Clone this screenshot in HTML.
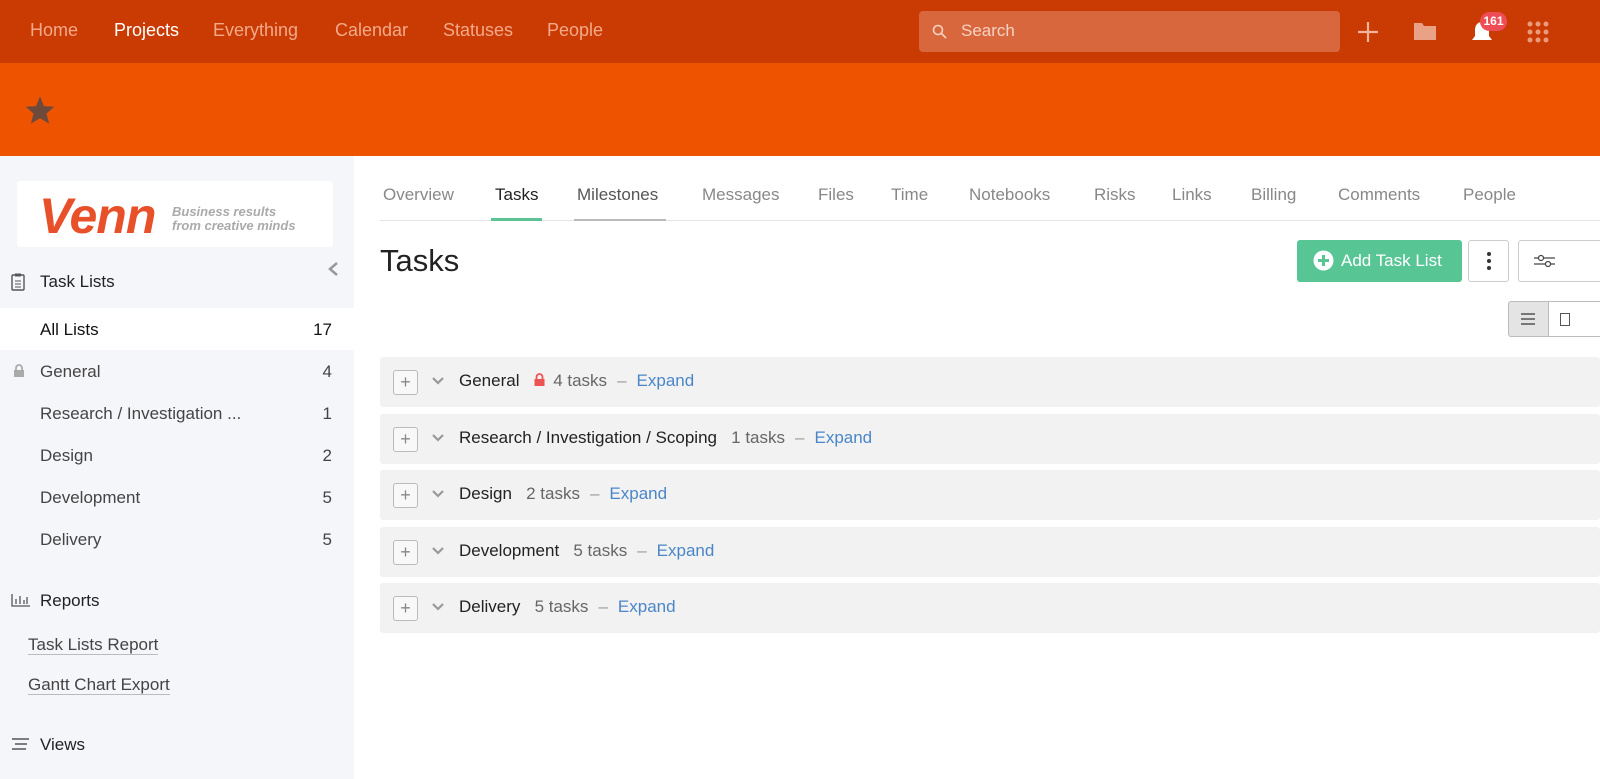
<!DOCTYPE html>
<html><head><meta charset="utf-8"><style>
*{box-sizing:border-box;margin:0;padding:0}
body{width:1600px;height:779px;overflow:hidden;font-family:"Liberation Sans",sans-serif;background:#fff;position:relative;color:#222}
.top{position:absolute;left:0;top:0;width:1600px;height:63px;background:#c93b02}
.top .nav{position:absolute;top:20px;font-size:18px;color:#f3a98a}
.search{position:absolute;left:919px;top:11px;width:421px;height:41px;background:#d8673e;border-radius:4px;color:#f7d2c2;font-size:17px;padding:10px 0 0 42px}
.band{position:absolute;left:0;top:63px;width:1600px;height:93px;background:#ee5400}
.side{position:absolute;left:0;top:156px;width:354px;height:623px;background:#f5f6fa}
.logo{position:absolute;left:17px;top:25px;width:316px;height:66px;background:#fff;border-radius:3px}
.si{position:absolute;font-size:17px;color:#444}
.cnt{position:absolute;right:22px;font-size:17px;color:#444}
.tab{position:absolute;top:185px;font-size:17px;color:#888}
.row{position:absolute;left:380px;width:1220px;height:50px;background:#f2f2f2;border-radius:3px}
.row .pb{position:absolute;left:13px;top:13px;width:25px;height:25px;border:1px solid #bbb;border-radius:3px;background:#f8f8f8;color:#888;font-size:18px;line-height:22px;text-align:center}
.row .ch{position:absolute;left:51px;top:19px}
.row .t{position:absolute;left:79px;top:14px;font-size:17px;white-space:nowrap;color:#222}
.row .t span.g{color:#666}
.row .t span.e{color:#4a86c8}
.row .t span.d{color:#999;margin:0 10px}
</style></head><body>
<div class="top">
<span class="nav" style="left:30px">Home</span>
<span class="nav" style="left:114px;color:#fff">Projects</span>
<span class="nav" style="left:213px">Everything</span>
<span class="nav" style="left:335px">Calendar</span>
<span class="nav" style="left:443px">Statuses</span>
<span class="nav" style="left:547px">People</span>
<div class="search"><svg style="position:absolute;left:13px;top:13px" width="15" height="15" viewBox="0 0 15 15"><circle cx="6" cy="6" r="4.5" fill="none" stroke="#f7d2c2" stroke-width="1.6"/><path d="M9.5 9.5L14 14" stroke="#f7d2c2" stroke-width="1.6"/></svg>Search</div>
<svg style="position:absolute;left:1357px;top:21px" width="22" height="22"><path d="M11 1V21M1 11H21" stroke="#f2b49a" stroke-width="2.2"/></svg>
<svg style="position:absolute;left:1413px;top:22px" width="24" height="19"><path d="M1 1H9L11 4H23V18H1Z" fill="#e9a285"/></svg>
<svg style="position:absolute;left:1470px;top:20px" width="24" height="24"><path d="M12 2C7 2 5 6 5 10V16L2 20H22L19 16V10C19 6 17 2 12 2Z" fill="#fff"/></svg>
<div style="position:absolute;left:1480px;top:12px;width:27px;height:19px;background:#ee4d55;border-radius:10px;color:#fff;font-size:12px;font-weight:bold;text-align:center;line-height:19px">161</div>
<svg style="position:absolute;left:1527px;top:21px" width="22" height="22" fill="#eb9a7c"><circle cx="3" cy="3" r="2.5"/><circle cx="11" cy="3" r="2.5"/><circle cx="19" cy="3" r="2.5"/><circle cx="3" cy="11" r="2.5"/><circle cx="11" cy="11" r="2.5"/><circle cx="19" cy="11" r="2.5"/><circle cx="3" cy="19" r="2.5"/><circle cx="11" cy="19" r="2.5"/><circle cx="19" cy="19" r="2.5"/></svg>
</div>
<div class="band"><svg style="position:absolute;left:24px;top:32px" width="32" height="30" viewBox="0 0 24 23"><path d="M12 1L15 8.5L23 9L17 14.2L19 22L12 17.8L5 22L7 14.2L1 9L9 8.5Z" fill="#6e4a3c"/></svg></div>
<div class="side">
<div class="logo"><span style="position:absolute;left:22px;top:6px;font-size:50px;font-weight:bold;font-style:italic;color:#e8502a;letter-spacing:-1px">Venn</span><span style="position:absolute;left:155px;top:24px;font-size:13px;font-style:italic;font-weight:bold;color:#aaa;line-height:14px">Business results<br>from creative minds</span></div>
<svg style="position:absolute;left:327px;top:105px" width="12" height="16"><path d="M10 2L3 8L10 14" fill="none" stroke="#999" stroke-width="2.5"/></svg>
<svg style="position:absolute;left:11px;top:117px" width="14" height="18"><rect x="1" y="2" width="12" height="15" rx="1" fill="none" stroke="#555" stroke-width="1.4"/><rect x="4" y="0.5" width="6" height="3" fill="#555"/><path d="M4 8H10M4 11H10M4 14H10" stroke="#555"/></svg>
<span class="si" style="left:40px;top:116px;color:#222">Task Lists</span>
<div style="position:absolute;left:0;top:152px;width:354px;height:42px;background:#fff"></div>
<span class="si" style="left:40px;top:164px;color:#111">All Lists</span><span class="cnt" style="top:164px;color:#111">17</span>
<svg style="position:absolute;left:13px;top:208px" width="12" height="14"><path d="M3 6V4A3 3 0 0 1 9 4V6" fill="none" stroke="#aaa" stroke-width="1.8"/><rect x="1" y="6" width="10" height="7" fill="#aaa"/></svg>
<span class="si" style="left:40px;top:206px">General</span><span class="cnt" style="top:206px">4</span>
<span class="si" style="left:40px;top:248px">Research / Investigation ...</span><span class="cnt" style="top:248px">1</span>
<span class="si" style="left:40px;top:290px">Design</span><span class="cnt" style="top:290px">2</span>
<span class="si" style="left:40px;top:332px">Development</span><span class="cnt" style="top:332px">5</span>
<span class="si" style="left:40px;top:374px">Delivery</span><span class="cnt" style="top:374px">5</span>
<svg style="position:absolute;left:11px;top:437px" width="20" height="14"><path d="M1 1V13H19M5 11V6M9 11V3M13 11V7M16 11V4" stroke="#555" stroke-width="1.3" fill="none"/></svg>
<span class="si" style="left:40px;top:435px;color:#222">Reports</span>
<span class="si" style="left:28px;top:480px;border-bottom:1px solid #bbb;line-height:18px">Task Lists Report</span>
<span class="si" style="left:28px;top:520px;border-bottom:1px solid #bbb;line-height:18px">Gantt Chart Export</span>
<svg style="position:absolute;left:12px;top:582px" width="18" height="12"><path d="M0 1H17M3 6H15M0 11H14" stroke="#555" stroke-width="1.6"/></svg>
<span class="si" style="left:40px;top:579px;color:#222">Views</span>
</div>
<span class="tab" style="left:383px">Overview</span>
<span class="tab" style="left:495px;color:#222">Tasks</span>
<span class="tab" style="left:577px;color:#555">Milestones</span>
<span class="tab" style="left:702px">Messages</span>
<span class="tab" style="left:818px">Files</span>
<span class="tab" style="left:891px">Time</span>
<span class="tab" style="left:969px">Notebooks</span>
<span class="tab" style="left:1094px">Risks</span>
<span class="tab" style="left:1172px">Links</span>
<span class="tab" style="left:1251px">Billing</span>
<span class="tab" style="left:1338px">Comments</span>
<span class="tab" style="left:1463px">People</span>
<div style="position:absolute;left:380px;top:220px;width:1220px;height:1px;background:#e3e3e3"></div>
<div style="position:absolute;left:491px;top:218px;width:51px;height:3px;background:#5cc397"></div>
<div style="position:absolute;left:574px;top:219px;width:92px;height:2px;background:#bbb"></div>
<div style="position:absolute;left:380px;top:243px;font-size:31px;color:#222">Tasks</div>
<div style="position:absolute;left:1297px;top:240px;width:165px;height:42px;background:#58c595;border-radius:3px;color:#fff;font-size:17px;padding:11px 0 0 44px">Add Task List</div>
<svg style="position:absolute;left:1313px;top:250px" width="21" height="21"><circle cx="10.5" cy="10.5" r="10" fill="#fff"/><path d="M10.5 5V16M5 10.5H16" stroke="#58c595" stroke-width="3"/></svg>
<div style="position:absolute;left:1468px;top:240px;width:41px;height:42px;border:1px solid #ccc;border-radius:3px;background:#fff"></div>
<svg style="position:absolute;left:1486px;top:251px" width="6" height="20" fill="#333"><circle cx="3" cy="3" r="2"/><circle cx="3" cy="10" r="2"/><circle cx="3" cy="17" r="2"/></svg>
<div style="position:absolute;left:1518px;top:240px;width:90px;height:42px;border:1px solid #ccc;border-radius:3px;background:#fff"></div>
<svg style="position:absolute;left:1533px;top:254px" width="24" height="14"><path d="M1 4H22M1 10H22" stroke="#444" stroke-width="1.2"/><circle cx="8" cy="4" r="2.5" fill="#fff" stroke="#444" stroke-width="1.2"/><circle cx="15" cy="10" r="2.5" fill="#fff" stroke="#444" stroke-width="1.2"/></svg>
<div style="position:absolute;left:1508px;top:301px;width:41px;height:36px;border:1px solid #bbb;background:#e4e4e4;border-radius:3px 0 0 3px"></div>
<svg style="position:absolute;left:1521px;top:313px" width="14" height="12"><path d="M0 1H14M0 6H14M0 11H14" stroke="#555" stroke-width="1.6"/></svg>
<div style="position:absolute;left:1548px;top:301px;width:60px;height:36px;border:1px solid #bbb;background:#fff"></div>
<div style="position:absolute;left:1560px;top:313px;width:10px;height:13px;border:1.5px solid #555"></div>

<div class="row" style="top:357px"><div class="pb">+</div><svg class="ch" width="14" height="10"><path d="M2 2L7 7L12 2" fill="none" stroke="#999" stroke-width="2.2"/></svg><div class="t">General <svg width="13" height="14" style="margin:0 7px 0 9px;vertical-align:-1px"><path d="M3.5 6V4A3 3 0 0 1 9.5 4V6" fill="none" stroke="#ee5353" stroke-width="1.8"/><rect x="1.5" y="6" width="10" height="7" fill="#ee5353"/></svg><span class="g">4 tasks</span><span class="d">–</span><span class="e">Expand</span></div></div>
<div class="row" style="top:414px"><div class="pb">+</div><svg class="ch" width="14" height="10"><path d="M2 2L7 7L12 2" fill="none" stroke="#999" stroke-width="2.2"/></svg><div class="t">Research / Investigation / Scoping &nbsp; <span class="g">1 tasks</span><span class="d">–</span><span class="e">Expand</span></div></div>
<div class="row" style="top:470px"><div class="pb">+</div><svg class="ch" width="14" height="10"><path d="M2 2L7 7L12 2" fill="none" stroke="#999" stroke-width="2.2"/></svg><div class="t">Design &nbsp; <span class="g">2 tasks</span><span class="d">–</span><span class="e">Expand</span></div></div>
<div class="row" style="top:527px"><div class="pb">+</div><svg class="ch" width="14" height="10"><path d="M2 2L7 7L12 2" fill="none" stroke="#999" stroke-width="2.2"/></svg><div class="t">Development &nbsp; <span class="g">5 tasks</span><span class="d">–</span><span class="e">Expand</span></div></div>
<div class="row" style="top:583px"><div class="pb">+</div><svg class="ch" width="14" height="10"><path d="M2 2L7 7L12 2" fill="none" stroke="#999" stroke-width="2.2"/></svg><div class="t">Delivery &nbsp; <span class="g">5 tasks</span><span class="d">–</span><span class="e">Expand</span></div></div>
</body></html>
